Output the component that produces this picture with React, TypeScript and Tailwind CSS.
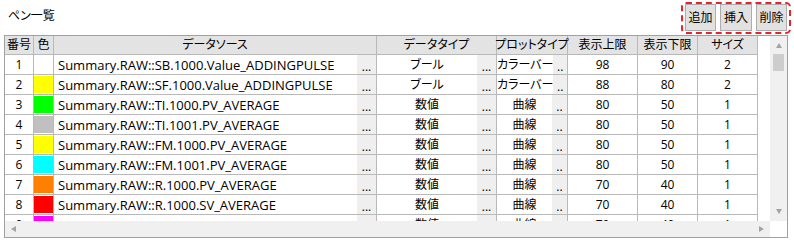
import React from 'react';

type Pen = {
  no: number;
  color: string;
  source: string;
  dataType: string;
  plotType: string;
  upper: string;
  lower: string;
  size: string;
};

const pens: Pen[] = [
  { no: 1, color: '#ffffff', source: 'Summary.RAW::SB.1000.Value_ADDINGPULSE', dataType: 'ブール', plotType: 'カラーバー', upper: '98', lower: '90', size: '2' },
  { no: 2, color: '#ffff00', source: 'Summary.RAW::SF.1000.Value_ADDINGPULSE', dataType: 'ブール', plotType: 'カラーバー', upper: '88', lower: '80', size: '2' },
  { no: 3, color: '#00ff00', source: 'Summary.RAW::TI.1000.PV_AVERAGE', dataType: '数値', plotType: '曲線', upper: '80', lower: '50', size: '1' },
  { no: 4, color: '#c0c0c0', source: 'Summary.RAW::TI.1001.PV_AVERAGE', dataType: '数値', plotType: '曲線', upper: '80', lower: '50', size: '1' },
  { no: 5, color: '#ffff00', source: 'Summary.RAW::FM.1000.PV_AVERAGE', dataType: '数値', plotType: '曲線', upper: '80', lower: '50', size: '1' },
  { no: 6, color: '#00ffff', source: 'Summary.RAW::FM.1001.PV_AVERAGE', dataType: '数値', plotType: '曲線', upper: '80', lower: '50', size: '1' },
  { no: 7, color: '#ff8000', source: 'Summary.RAW::R.1000.PV_AVERAGE', dataType: '数値', plotType: '曲線', upper: '70', lower: '40', size: '1' },
  { no: 8, color: '#ff0000', source: 'Summary.RAW::R.1000.SV_AVERAGE', dataType: '数値', plotType: '曲線', upper: '70', lower: '40', size: '1' },
  { no: 9, color: '#ff00ff', source: 'Summary.RAW::R.1001.PV_AVERAGE', dataType: '数値', plotType: '曲線', upper: '70', lower: '40', size: '1' },
];

const cell = 'h-full flex items-center justify-center border-r border-[#b9b9b9] shrink-0 whitespace-nowrap';

function Arrow({ dir }: { dir: 'up' | 'down' | 'left' | 'right' }) {
  const pts = {
    up: '0,5 3,0 6,5',
    down: '0,0 6,0 3,5',
    left: '5,0 5,6 0,3',
    right: '0,0 0,6 5,3',
  }[dir];
  const vertical = dir === 'up' || dir === 'down';
  return (
    <svg width={vertical ? 6 : 5} height={vertical ? 5 : 6} viewBox={vertical ? '0 0 6 5' : '0 0 5 6'}>
      <polygon points={pts} fill="#a3a3a3" />
    </svg>
  );
}

function TopButton({ label, w }: { label: string; w: string }) {
  return (
    <button className={`${w} h-[27px] bg-[#e1e1e1] border border-[#adadad] text-[12px] text-black flex items-center justify-center`}>
      {label}
    </button>
  );
}

export default function App() {
  return (
    <div className="w-[794px] h-[244px] bg-white text-[12px] text-black font-['Open_Sans','Noto_Sans_CJK_JP',sans-serif] leading-none [font-feature-settings:'palt']">
      <div className="flex justify-between h-[35px]">
        <div className="pl-[8px] pt-[10px]">ペン一覧</div>
        <div className="mt-[2px] mr-[3px] h-[32px] px-[2px] border-2 border-dashed border-[#e5242c] rounded-[5px] flex gap-[4px] items-start">
          <TopButton label="追加" w="w-[31px]" />
          <TopButton label="挿入" w="w-[32px]" />
          <TopButton label="削除" w="w-[31px]" />
        </div>
      </div>

      <div className="ml-[4px] w-[784px] h-[203px] border border-[#a0a0a0] flex flex-col">
        <div className="flex h-[185px]">
          <div className="w-[765px] h-full overflow-hidden">
            <div className="flex h-[19px] border-b border-[#b9b9b9] bg-[#e3e3e3] w-[753px]">
              <div className={`${cell} w-[29px]`}>番号</div>
              <div className={`${cell} w-[20px]`}>色</div>
              <div className={`${cell} w-[323px]`}>データソース</div>
              <div className={`${cell} w-[120px]`}>データタイプ</div>
              <div className={`${cell} w-[71px]`}>プロットタイプ</div>
              <div className={`${cell} w-[70px]`}>表示上限</div>
              <div className={`${cell} w-[60px]`}>表示下限</div>
              <div className={`${cell} w-[60px]`}>サイズ</div>
            </div>
            {pens.map((p) => (
              <div key={p.no} className="flex h-[20px] border-b border-[#b9b9b9] w-[753px] shrink-0">
                <div className={`${cell} w-[29px] pt-[1px]`}>{p.no}</div>
                <div className="h-full w-[20px] border-r border-[#b9b9b9] py-[1px] shrink-0">
                  <div className="w-full h-full" style={{ backgroundColor: p.color }} />
                </div>
                <div className="h-full w-[323px] flex border-r border-[#b9b9b9] shrink-0">
                  <div className="flex-1 flex items-center pl-[4px] pt-[2px] text-[13px] whitespace-nowrap">{p.source}</div>
                  <div className="w-[19px] bg-[#efefef] flex items-center justify-center pt-[4px]">...</div>
                </div>
                <div className="h-full w-[120px] flex border-r border-[#b9b9b9] shrink-0">
                  <div className="flex-1 flex items-center justify-center pt-[1px] whitespace-nowrap">{p.dataType}</div>
                  <div className="w-[19px] bg-[#efefef] flex items-center justify-center pt-[4px]">...</div>
                </div>
                <div className="h-full w-[71px] flex border-r border-[#b9b9b9] shrink-0">
                  <div className="flex-1 flex items-center justify-center pt-[1px] whitespace-nowrap">{p.plotType}</div>
                  <div className="w-[15px] bg-[#efefef] flex items-center justify-center pt-[4px]">..</div>
                </div>
                <div className={`${cell} w-[70px] pt-[1px]`}>{p.upper}</div>
                <div className={`${cell} w-[60px] pt-[1px]`}>{p.lower}</div>
                <div className={`${cell} w-[60px] pt-[1px]`}>{p.size}</div>
              </div>
            ))}
          </div>
          <div className="w-[17px] h-full bg-[#f0f0f0] flex flex-col items-center">
            <div className="h-[17px] flex items-center justify-center pt-[2px]">
              <Arrow dir="up" />
            </div>
            <div className="mt-[1px] w-[11px] h-[17px] bg-[#cdcdcd]" />
            <div className="flex-1" />
            <div className="h-[17px] flex items-center justify-center pb-[2px]">
              <Arrow dir="down" />
            </div>
          </div>
        </div>
        <div className="flex h-[16px]">
          <div className="w-[765px] h-full bg-[#f0f0f0] flex items-center justify-between px-[6px]">
            <Arrow dir="left" />
            <Arrow dir="right" />
          </div>
          <div className="w-[17px] h-full bg-white" />
        </div>
      </div>
    </div>
  );
}
